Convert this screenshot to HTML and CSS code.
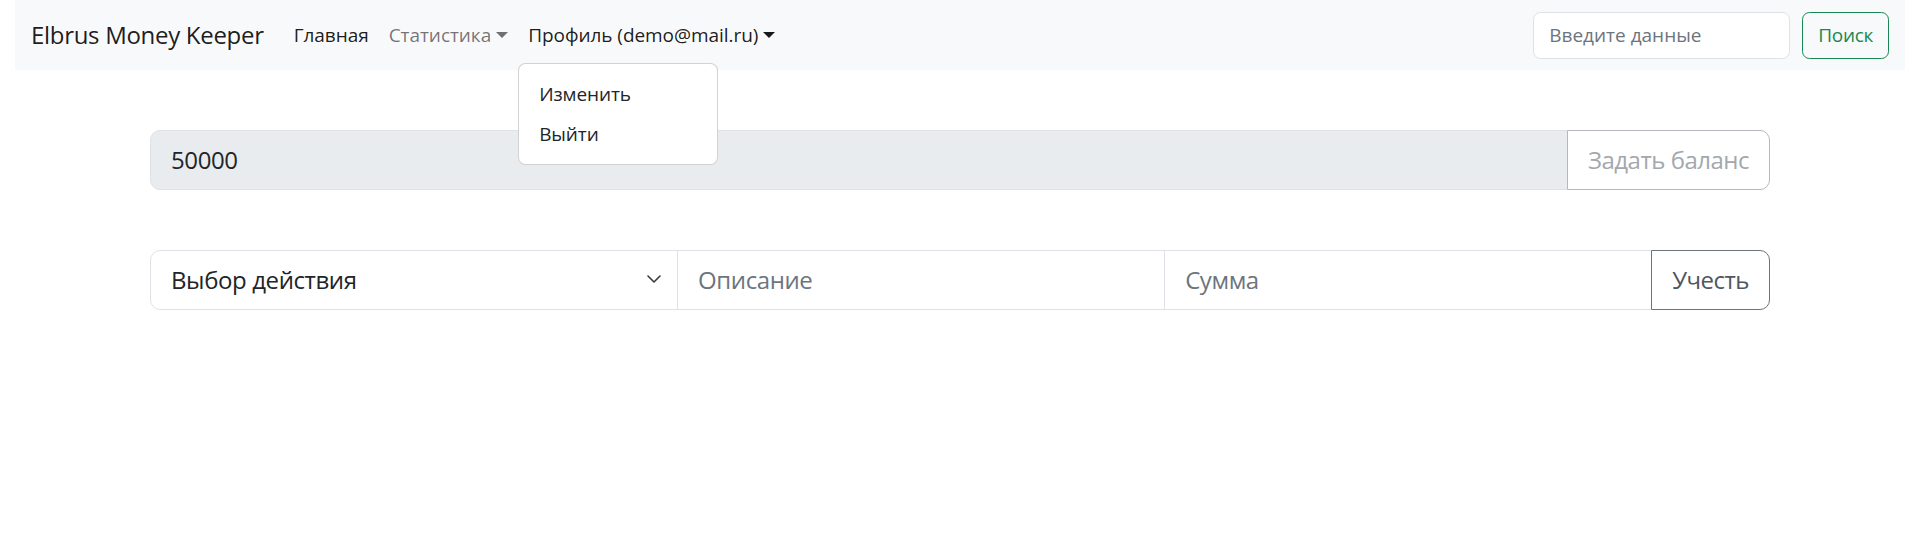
FILE: index.html
```html
<!DOCTYPE html>
<html lang="ru">
<head>
<meta charset="utf-8">
<title>Elbrus Money Keeper</title>
<link rel="stylesheet" href="styles.css">
</head>
<body>
<div class="page">
  <div class="nav-wrap">
    <nav class="navbar">
      <a class="brand" href="#">Elbrus Money Keeper</a>
      <ul class="nav">
        <li class="nav-item"><a class="nav-link active" href="#">Главная</a></li>
        <li class="nav-item"><a class="nav-link muted toggle" href="#">Статистика</a></li>
        <li class="nav-item dropdown">
          <a class="nav-link active toggle" href="#">Профиль (demo@mail.ru)</a>
          <ul class="dropdown-menu">
            <li><a class="dropdown-item" href="#">Изменить</a></li>
            <li><a class="dropdown-item" href="#">Выйти</a></li>
          </ul>
        </li>
      </ul>
      <form class="search">
        <input class="search-input" type="search" placeholder="Введите данные">
        <button class="search-btn" type="button">Поиск</button>
      </form>
    </nav>
  </div>
  <main class="container">
    <div class="input-group balance">
      <input class="field readonly" type="text" value="50000" readonly>
      <button class="btn btn-disabled" type="button">Задать баланс</button>
    </div>
    <div class="input-group action">
      <div class="select-wrap">
        <select class="field select">
          <option>Выбор действия</option>
        </select>
        <svg class="chevron" width="16" height="12" viewBox="0 0 16 12" aria-hidden="true"><path d="M2 5l6 6 6-6" fill="none" stroke="#343a40" stroke-width="1.6" stroke-linecap="round" stroke-linejoin="round"/></svg>
      </div>
      <input class="field grow" type="text" placeholder="Описание">
      <input class="field grow" type="text" placeholder="Сумма">
      <button class="btn btn-outline" type="button">Учесть</button>
    </div>
  </main>
</div>
</body>
</html>
```
FILE: styles.css
```css
* { box-sizing: border-box; }
html, body { margin: 0; padding: 0; background: #fff; }
body {
  font-family: "Open Sans", "Noto Sans", sans-serif;
  color: #212529;
  font-size: 20px;
  line-height: 1.5;
}
.nav-wrap { padding: 0 15px; }
.navbar {
  background: #f8f9fa;
  display: flex;
  align-items: center;
  padding: 10px 16px;
  height: 70px;
}
.brand {
  font-size: 24px;
  line-height: 37.5px;
  color: rgba(0,0,0,.9);
  text-decoration: none;
  margin-right: 20px;
  letter-spacing: -0.3px;
}
.nav {
  display: flex;
  list-style: none;
  margin: 0;
  padding: 0;
}
.nav-item { position: relative; }
.nav-link {
  display: block;
  padding: 10px;
  font-size: 19px;
  line-height: 30px;
  text-decoration: none;
  color: rgba(0,0,0,.9);
  letter-spacing: -0.05px;
}
.nav-link.muted { color: rgba(0,0,0,.55); }
.toggle::after {
  content: "";
  display: inline-block;
  margin-left: 5px;
  vertical-align: 4px;
  border-top: 6px solid;
  border-left: 6px solid transparent;
  border-right: 6px solid transparent;
}
.dropdown-menu {
  position: absolute;
  top: 100%;
  left: 0;
  margin: 3px 0 0;
  min-width: 200px;
  padding: 10px 0;
  list-style: none;
  background: #fff;
  border: 1px solid rgba(0,0,0,.175);
  border-radius: 7.5px;
  z-index: 10;
}
.dropdown-item {
  display: block;
  padding: 5px 20px;
  font-size: 19px;
  line-height: 30px;
  color: #212529;
  text-decoration: none;
  white-space: nowrap;
  letter-spacing: -0.1px;
}
.search {
  margin-left: auto;
  display: flex;
  gap: 12px;
}
.search-input {
  width: 257px;
  height: 47px;
  padding: 7.5px 15px;
  font: inherit;
  font-size: 19px;
  border: 1px solid #dee2e6;
  border-radius: 7.5px;
  background: #fff;
  color: #212529;
}
.search-input::placeholder { color: #6c757d; }
.search-btn {
  height: 47px;
  padding: 7.5px 15px;
  font: inherit;
  font-size: 19px;
  color: #198754;
  background: transparent;
  border: 1px solid #198754;
  border-radius: 7.5px;
  letter-spacing: -0.3px;
}
.container {
  width: 1620px;
  margin: 0 auto;
  padding-top: 60px;
}
.input-group {
  display: flex;
  align-items: stretch;
  width: 100%;
  height: 60px;
}
.action { margin-top: 60px; }
.field {
  font: inherit;
  font-size: 24px;
  line-height: 37.5px;
  padding: 10px 20px;
  border: 1px solid #dee2e6;
  background: #fff;
  color: #212529;
  border-radius: 0;
  min-width: 0;
  letter-spacing: -0.4px;
}
.field::placeholder { color: #6c757d; }
.input-group > :not(:first-child) { margin-left: -1px; }
.input-group > :first-child { border-radius: 10px 0 0 10px; }
.input-group > :last-child { border-radius: 0 10px 10px 0; }
.readonly {
  flex: 1 1 auto;
  width: 1%;
  background: #e9ecef;
}
.grow { flex: 1 1 42px; width: 42px; }
.select-wrap {
  position: relative;
  flex: 1 1 82px;
  width: 82px;
  display: flex;
}
.select {
  width: 100%;
  padding-right: 60px;
  appearance: none;
  -webkit-appearance: none;
  border-radius: 10px 0 0 10px;
}
.chevron {
  position: absolute;
  right: 16px;
  top: 50%;
  margin-top: -9px;
  pointer-events: none;
}
.btn {
  font: inherit;
  font-size: 24px;
  line-height: 37.5px;
  padding: 10px 20px;
  background: #fff;
  white-space: nowrap;
  letter-spacing: -0.5px;
}
.btn-disabled {
  color: #a3a8ad;
  border: 1px solid #b5b9bd;
  position: relative;
}
.btn-outline {
  color: #50575e;
  border: 1px solid #6c757d;
  position: relative;
}
```
